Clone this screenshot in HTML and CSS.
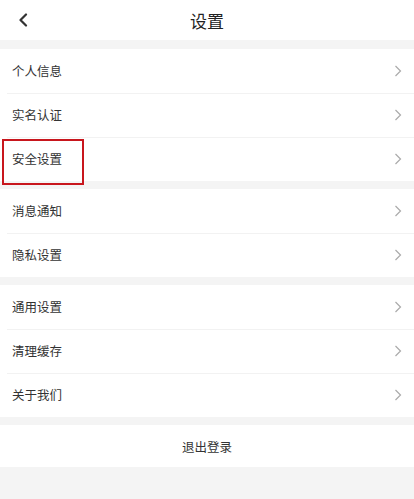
FILE: index.html
```html
<!DOCTYPE html>
<html lang="zh">
<head>
<meta charset="utf-8">
<title>设置</title>
<link rel="stylesheet" href="styles.css">
</head>
<body>
<div class="page">
  <header class="nav">
    <span class="back">
      <svg width="10" height="14" viewBox="0 0 10 14"><path d="M8 1.5 L2.5 7 L8 12.5" fill="none" stroke="#333" stroke-width="2.2" stroke-linecap="round" stroke-linejoin="round"/></svg>
    </span>
    <h1 class="title">设置</h1>
  </header>

  <section class="group">
    <div class="row"><span class="label">个人信息</span><span class="chev"><svg width="8" height="12" viewBox="0 0 8 12"><path d="M1.5 1 L6.5 6 L1.5 11" fill="none" stroke="#aaa" stroke-width="1.2"/></svg></span></div>
    <div class="row"><span class="label">实名认证</span><span class="chev"><svg width="8" height="12" viewBox="0 0 8 12"><path d="M1.5 1 L6.5 6 L1.5 11" fill="none" stroke="#aaa" stroke-width="1.2"/></svg></span></div>
    <div class="row highlighted"><span class="label">安全设置</span><span class="chev"><svg width="8" height="12" viewBox="0 0 8 12"><path d="M1.5 1 L6.5 6 L1.5 11" fill="none" stroke="#aaa" stroke-width="1.2"/></svg></span><span class="mark"></span></div>
  </section>

  <section class="group">
    <div class="row"><span class="label">消息通知</span><span class="chev"><svg width="8" height="12" viewBox="0 0 8 12"><path d="M1.5 1 L6.5 6 L1.5 11" fill="none" stroke="#aaa" stroke-width="1.2"/></svg></span></div>
    <div class="row"><span class="label">隐私设置</span><span class="chev"><svg width="8" height="12" viewBox="0 0 8 12"><path d="M1.5 1 L6.5 6 L1.5 11" fill="none" stroke="#aaa" stroke-width="1.2"/></svg></span></div>
  </section>

  <section class="group">
    <div class="row"><span class="label">通用设置</span><span class="chev"><svg width="8" height="12" viewBox="0 0 8 12"><path d="M1.5 1 L6.5 6 L1.5 11" fill="none" stroke="#aaa" stroke-width="1.2"/></svg></span></div>
    <div class="row"><span class="label">清理缓存</span><span class="chev"><svg width="8" height="12" viewBox="0 0 8 12"><path d="M1.5 1 L6.5 6 L1.5 11" fill="none" stroke="#aaa" stroke-width="1.2"/></svg></span></div>
    <div class="row"><span class="label">关于我们</span><span class="chev"><svg width="8" height="12" viewBox="0 0 8 12"><path d="M1.5 1 L6.5 6 L1.5 11" fill="none" stroke="#aaa" stroke-width="1.2"/></svg></span></div>
  </section>

  <section class="group logout">
    <div class="logout-btn">退出登录</div>
  </section>
</div>
</body>
</html>
```

FILE: styles.css
```css
* { box-sizing: border-box; }
html, body {
  margin: 0;
  padding: 0;
  background: #f4f4f4;
}
body {
  font-family: "Noto Sans CJK SC", "Noto Sans", sans-serif;
  color: #333;
}
.page {
  width: 414px;
  min-height: 499px;
  display: flex;
  flex-direction: column;
  gap: 9px;
}
.nav {
  height: 40px;
  background: #fff;
  display: flex;
  align-items: center;
  justify-content: center;
  position: relative;
}
.back {
  position: absolute;
  left: 18px;
  top: 13px;
  display: flex;
}
.title {
  margin: 0;
  font-size: 17px;
  font-weight: 400;
  color: #222;
  line-height: 1;
}
.group {
  background: #fff;
  display: flex;
  flex-direction: column;
  margin-bottom: -1px;
}
.row {
  height: 44px;
  display: flex;
  align-items: center;
  justify-content: space-between;
  padding: 0 12px 0 12px;
  position: relative;
}
.row + .row::before {
  content: "";
  position: absolute;
  left: 7px;
  right: 0;
  top: 0;
  height: 1px;
  background: #f2f2f2;
}
.label {
  font-size: 12.5px;
  color: #333;
  line-height: 1;
}
.chev {
  display: flex;
  margin-right: 0;
}
.highlighted .mark {
  position: absolute;
  left: 2px;
  top: 2px;
  width: 82px;
  height: 46px;
  border: 2px solid #c8161d;
  pointer-events: none;
}
.logout {
  margin-bottom: 0;
}
.logout-btn {
  height: 42px;
  display: flex;
  align-items: center;
  justify-content: center;
  font-size: 12.5px;
  color: #333;
}
```
